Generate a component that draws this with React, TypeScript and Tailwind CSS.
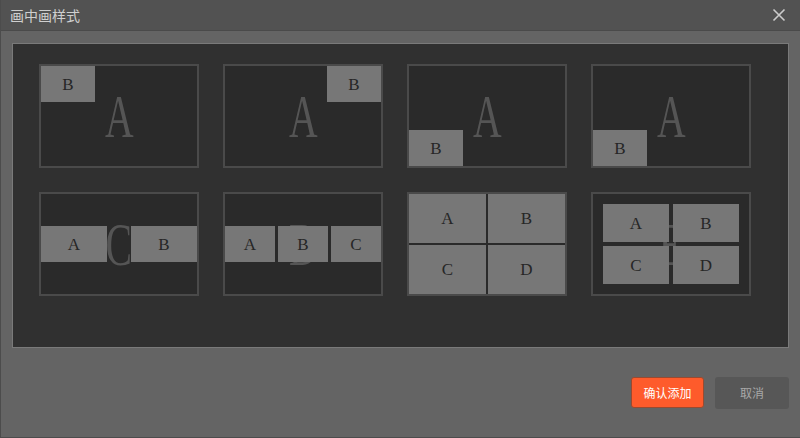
import React from "react";

const serif = { fontFamily: '"Liberation Serif", "DejaVu Serif", serif' };

function Big({ ch }: { ch: string }) {
  return (
    <div className="absolute inset-0 flex items-center justify-center pointer-events-none">
      <span
        className="text-[62px] leading-none text-[#555555] scale-x-[0.64] inline-block"
        style={serif}
      >
        {ch}
      </span>
    </div>
  );
}

function Box({ ch, className }: { ch: string; className: string }) {
  return (
    <div
      className={`bg-[#777777] flex items-center justify-center text-[17px] leading-none text-[#262626] ${className}`}
      style={serif}
    >
      {ch}
    </div>
  );
}

function Card({ children, className = "" }: { children: React.ReactNode; className?: string }) {
  return (
    <div
      className={`relative w-[160px] h-[104px] border-2 border-[#4a4a4a] bg-[#2a2a2a] overflow-hidden ${className}`}
    >
      {children}
    </div>
  );
}

export default function App() {
  return (
    <div
      className="w-[800px] h-[438px] flex flex-col bg-[#646464] border-l border-b border-[#4c4c4c]"
      style={{ fontFamily: '"Noto Sans CJK SC", "Noto Sans", sans-serif' }}
    >
      <div className="h-[31px] shrink-0 bg-[#525252] border-b border-[#4a4a4a] flex items-center justify-between pl-[9px] pr-[14px]">
        <span className="text-[14px] text-[#cfcfcf] leading-none">画中画样式</span>
        <svg width="14" height="14" viewBox="0 0 14 14" className="text-[#cccccc]">
          <path d="M1.5 1.5 L12.5 12.5 M12.5 1.5 L1.5 12.5" stroke="currentColor" strokeWidth="1.6" />
        </svg>
      </div>
      <div className="flex-1 flex flex-col pt-[12px] pl-[11px] pr-[11px]">
        <div className="h-[305px] border border-[#7a7a7a] bg-[#303030] pt-[20px] pl-[26px]">
          <div className="grid grid-cols-[repeat(4,160px)] gap-x-[24px] gap-y-[24px]">
            <Card>
              <Big ch="A" />
              <Box ch="B" className="absolute top-0 left-0 w-[54px] h-[36px]" />
            </Card>
            <Card>
              <Big ch="A" />
              <Box ch="B" className="absolute top-0 right-0 w-[54px] h-[36px]" />
            </Card>
            <Card>
              <Big ch="A" />
              <Box ch="B" className="absolute bottom-0 left-0 w-[54px] h-[36px]" />
            </Card>
            <Card>
              <Big ch="A" />
              <Box ch="B" className="absolute bottom-0 left-0 w-[54px] h-[36px]" />
            </Card>

            <Card>
              <Big ch="C" />
              <div className="relative h-full flex items-center justify-between">
                <Box ch="A" className="w-[66px] h-[36px]" />
                <Box ch="B" className="w-[66px] h-[36px]" />
              </div>
            </Card>
            <Card>
              <Big ch="D" />
              <div className="relative h-full flex items-center gap-[3px]">
                <Box ch="A" className="w-[50px] h-[36px]" />
                <Box ch="B" className="w-[50px] h-[36px]" />
                <Box ch="C" className="w-[50px] h-[36px]" />
              </div>
            </Card>
            <Card>
              <div className="h-full grid grid-cols-2 grid-rows-2 gap-[2px]">
                <Box ch="A" className="" />
                <Box ch="B" className="" />
                <Box ch="C" className="" />
                <Box ch="D" className="" />
              </div>
            </Card>
            <Card>
              <Big ch="E" />
              <div className="relative h-full p-[10px] grid grid-cols-2 grid-rows-2 gap-[4px]">
                <Box ch="A" className="" />
                <Box ch="B" className="" />
                <Box ch="C" className="" />
                <Box ch="D" className="" />
              </div>
            </Card>
          </div>
        </div>
        <div className="flex justify-end gap-[11px] mt-[29px]">
          <button className="w-[73px] h-[31px] rounded-[3px] bg-[#fe5b2b] border border-[#9a4a30] text-white text-[12px] leading-none">
            确认添加
          </button>
          <button className="w-[74px] h-[32px] rounded-[3px] bg-[#575757] text-[#a8a8a8] text-[12px] leading-none">
            取消
          </button>
        </div>
      </div>
    </div>
  );
}
